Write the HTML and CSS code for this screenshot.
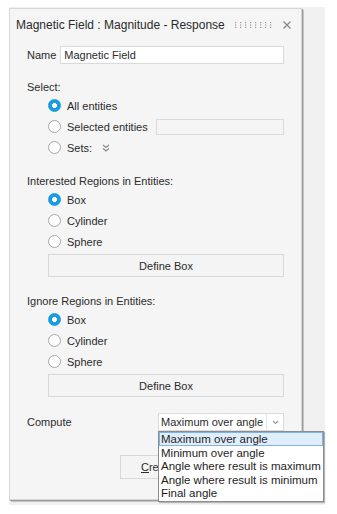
FILE: index.html
```html
<!DOCTYPE html>
<html lang="en">
<head>
    <meta charset="UTF-8">
    <meta name="viewport" content="width=device-width, initial-scale=1.0">
    <title>Magnetic Field : Magnitude - Response</title>
    <link rel="stylesheet" href="styles.css">
</head>
<body>
    <div class="backdrop">
        <div class="panel">
            <div class="title-bar">
                <span class="title">Magnetic Field : Magnitude - Response</span>
                <svg class="grip" width="40" height="6" viewBox="0 0 40 6">
                    <g fill="#9a9a9a">
                        <rect x="0" y="0" width="1.2" height="1.2"/><rect x="0" y="2.4" width="1.2" height="1.2"/><rect x="0" y="4.8" width="1.2" height="1.2"/>
                        <rect x="5" y="0" width="1.2" height="1.2"/><rect x="5" y="2.4" width="1.2" height="1.2"/><rect x="5" y="4.8" width="1.2" height="1.2"/>
                        <rect x="10" y="0" width="1.2" height="1.2"/><rect x="10" y="2.4" width="1.2" height="1.2"/><rect x="10" y="4.8" width="1.2" height="1.2"/>
                        <rect x="15" y="0" width="1.2" height="1.2"/><rect x="15" y="2.4" width="1.2" height="1.2"/><rect x="15" y="4.8" width="1.2" height="1.2"/>
                        <rect x="20" y="0" width="1.2" height="1.2"/><rect x="20" y="2.4" width="1.2" height="1.2"/><rect x="20" y="4.8" width="1.2" height="1.2"/>
                        <rect x="25" y="0" width="1.2" height="1.2"/><rect x="25" y="2.4" width="1.2" height="1.2"/><rect x="25" y="4.8" width="1.2" height="1.2"/>
                        <rect x="30" y="0" width="1.2" height="1.2"/><rect x="30" y="2.4" width="1.2" height="1.2"/><rect x="30" y="4.8" width="1.2" height="1.2"/>
                        <rect x="35" y="0" width="1.2" height="1.2"/><rect x="35" y="2.4" width="1.2" height="1.2"/><rect x="35" y="4.8" width="1.2" height="1.2"/>
                    </g>
                </svg>
                <svg class="close" width="8" height="8" viewBox="0 0 8 8">
                    <path d="M0.5 0.5 L7.5 7.5 M7.5 0.5 L0.5 7.5" stroke="#8a8a8a" stroke-width="1.3" fill="none"/>
                </svg>
            </div>

            <div class="body">
                <div class="name-row">
                    <label for="name">Name</label>
                    <input type="text" id="name" class="text-input" value="Magnetic Field">
                </div>

                <div class="section-label first">Select:</div>
                <div class="radio-group">
                    <div class="radio-row"><span class="radio checked"></span>All entities</div>
                    <div class="radio-row"><span class="radio"></span>Selected entities<span class="entity-box"></span></div>
                    <div class="radio-row"><span class="radio"></span>Sets:
                        <svg class="expand" width="8" height="8" viewBox="0 0 8 8">
                            <path d="M1 1 L4 3.5 L7 1 M1 4.5 L4 7 L7 4.5" stroke="#8a8a8a" stroke-width="1.2" fill="none"/>
                        </svg>
                    </div>
                </div>

                <div class="section-label">Interested Regions in Entities:</div>
                <div class="radio-group">
                    <div class="radio-row"><span class="radio checked"></span>Box</div>
                    <div class="radio-row"><span class="radio"></span>Cylinder</div>
                    <div class="radio-row"><span class="radio"></span>Sphere</div>
                    <button class="define-btn">Define Box</button>
                </div>

                <div class="section-label ignore">Ignore Regions in Entities:</div>
                <div class="radio-group">
                    <div class="radio-row"><span class="radio checked"></span>Box</div>
                    <div class="radio-row"><span class="radio"></span>Cylinder</div>
                    <div class="radio-row"><span class="radio"></span>Sphere</div>
                    <button class="define-btn">Define Box</button>
                </div>

                <div class="compute-row">
                    <span>Compute</span>
                    <div class="combo">
                        <span class="combo-value">Maximum over angle</span>
                        <span class="combo-arrow">
                            <svg width="7" height="5" viewBox="0 0 7 5"><path d="M1 1 L3.5 3.5 L6 1" stroke="#9a9a9a" stroke-width="1.1" fill="none"/></svg>
                        </span>
                        <ul class="dropdown">
                            <li class="active">Maximum over angle</li>
                            <li>Minimum over angle</li>
                            <li>Angle where result is maximum</li>
                            <li>Angle where result is minimum</li>
                            <li>Final angle</li>
                        </ul>
                    </div>
                </div>

                <div class="actions">
                    <button class="create-btn"><u>C</u>reate</button>
                </div>
            </div>
        </div>
    </div>
</body>
</html>
```

FILE: styles.css
```css
body {
    margin: 0;
    background: #fff;
    font-family: "Liberation Sans", Arial, sans-serif;
    font-size: 11px;
    color: #2b2b2b;
}
.backdrop {
    margin: 7px 0 0 9px;
    width: 316px;
    padding: 1px 0 5px 0;
    background: #f0f0f0;
}
.panel {
    width: 291px;
    height: 490px;
    background: #f5f5f5;
    border: 1px solid #d6d6d6;
    box-shadow: 1px 1px 0 #9c9c9c, 2px 2px 0 #c4c4c4;
    position: relative;
}
.title-bar {
    height: 32px;
    display: flex;
    align-items: center;
    padding: 0 10px 0 6px;
}
.title {
    font-size: 12px;
    color: #2a2a2a;
    flex: 1;
}
.grip {
    margin-right: 8px;
}
.body {
    padding: 0 17px;
}
.name-row {
    margin-top: 5px;
    height: 18px;
    display: flex;
    align-items: center;
    gap: 4px;
}
.text-input {
    flex: 1;
    height: 18px;
    box-sizing: border-box;
    border: 1px solid #dadada;
    background: #fff;
    font: inherit;
    color: #2b2b2b;
    padding: 0 3px;
    outline: none;
}
.section-label {
    margin-top: 15px;
    line-height: 16px;
}
.section-label.ignore {
    margin-top: 16px;
}
.radio-group {
    padding-left: 21px;
}
.radio-row {
    height: 21px;
    display: flex;
    align-items: center;
}
.radio {
    width: 11px;
    height: 11px;
    border-radius: 50%;
    border: 1px solid #a6a6a6;
    background: #fff;
    margin-right: 6px;
    box-sizing: content-box;
}
.radio.checked {
    border-color: #1a9be2;
    background: radial-gradient(circle, #fff 0 2.2px, #1a9be2 2.8px);
}
.entity-box {
    flex: 1;
    margin-left: 8px;
    height: 16px;
    box-sizing: border-box;
    border: 1px solid #dadada;
    background: #f5f5f5;
}
.expand {
    margin-left: 10px;
}
.define-btn {
    display: block;
    margin-top: 2px;
    width: 100%;
    height: 23px;
    background: #f4f4f4;
    border: 1px solid #d8d8d8;
    font: inherit;
    color: #2b2b2b;
}
.compute-row {
    margin-top: 16px;
    height: 18px;
    display: flex;
    align-items: center;
    justify-content: space-between;
}
.combo {
    position: relative;
    width: 126px;
    height: 18px;
    box-sizing: border-box;
    border: 1px solid #dcdcdc;
    background: #fff;
    display: flex;
    align-items: center;
}
.combo-value {
    flex: 1;
    padding-left: 2px;
}
.combo-arrow {
    width: 16px;
    height: 16px;
    border-left: 1px solid #e4e4e4;
    display: flex;
    align-items: center;
    justify-content: center;
}
.dropdown {
    position: absolute;
    top: 17px;
    left: -1px;
    width: 166px;
    margin: 0;
    padding: 0 0 1px;
    list-style: none;
    background: #fff;
    border: 1px solid #8c8c8c;
    box-shadow: 1px 1px 1px rgba(0, 0, 0, 0.25);
    box-sizing: border-box;
    font-size: 11.5px;
    color: #1e1e1e;
    z-index: 2;
}
.dropdown li {
    height: 12px;
    line-height: 12px;
    padding: 0 1px;
    border: 1px solid transparent;
    margin-bottom: -0.5px;
    white-space: nowrap;
}
.dropdown li.active {
    background: #e0eefc;
    border-color: #7eb4ea;
}
.actions {
    margin-top: 24px;
    padding-left: 93px;
}
.create-btn {
    width: 75px;
    height: 24px;
    background: #f4f4f4;
    border: 1px solid #d8d8d8;
    font: inherit;
    color: #2b2b2b;
}
```
